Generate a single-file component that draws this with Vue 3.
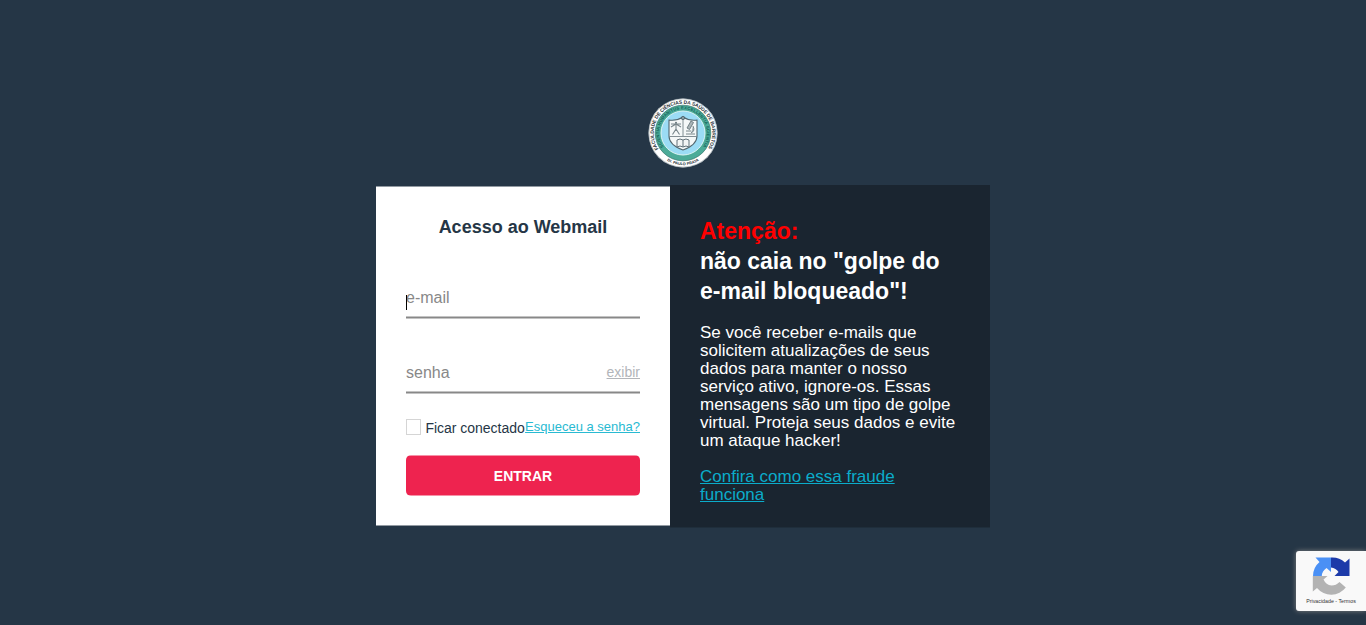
<script setup>
const message = [
  'Se você receber e-mails que',
  'solicitem atualizações de seus',
  'dados para manter o nosso',
  'serviço ativo, ignore-os. Essas',
  'mensagens são um tipo de golpe',
  'virtual. Proteja seus dados e evite',
  'um ataque hacker!',
]
</script>

<template>
  <main class="page">
    <svg class="crest" viewBox="0 0 80 80" width="80" height="80">
      <defs>
        <path id="outer-top" d="M15.4 56 A29.3 29.3 0 1 1 64.6 56" />
        <path id="outer-bottom" d="M12 55.6 A32 32 0 0 0 68 55.6" />
        <path id="inner-top" d="M20.7 54 A23.8 23.8 0 1 1 59.3 54" />
      </defs>
      <circle cx="40" cy="40" r="34.5" fill="#fff" />
      <circle cx="40" cy="40" r="34.2" fill="none" stroke="#87939b" stroke-width=".6" />
      <circle cx="40" cy="40" r="27.8" fill="#4cab98" stroke="#37756d" stroke-width=".7" />
      <circle cx="40" cy="40" r="22" fill="#9bdcf5" stroke="#dff5f5" stroke-width="1" />
      <text class="ring"><textPath href="#outer-top" textLength="124">FACULDADE DE CIÊNCIAS DA SAÚDE DE BARRETOS</textPath></text>
      <text class="ring small"><textPath href="#outer-bottom" startOffset="50%" text-anchor="middle">Dr. PAULO PRATA</textPath></text>
      <text class="ring motto"><textPath href="#inner-top" textLength="103">SCIENTIA HUMANITUS EXCELLENTIA SCIENTIA</textPath></text>
      <path d="M26 27 Q34 28 40 24 Q46 28 54 27 V43 Q54 52 40 57 Q26 52 26 43 Z" fill="#f4f8f8" stroke="#52666e" stroke-width="1.1" />
      <path d="M26.5 43.5 H53.5 M40 26 V43" stroke="#66747a" stroke-width=".8" />
      <circle cx="40" cy="25" r="1.7" fill="#87999e" stroke="#405a63" stroke-width=".7" />
      <circle cx="33" cy="29.8" r="1" fill="#68777d" />
      <path d="M28 31 H38 M28 34 L33 31 L38 34 M33 30 V36 L29.5 41.5 M33 36 L36.5 41.5" fill="none" stroke="#78868b" stroke-width="1.1" />
      <path d="M48 28 L50.5 29.5 L46.5 36.5 L44 35 Z M50 33 Q52.5 38 48 40 M43 41 H52 M43 38 H48" fill="#a9b4b7" stroke="#69787e" stroke-width=".9" />
      <path d="M34 47 Q37 45 40 47 Q43 45 46 47 V54 Q43 52 40 54 Q37 52 34 54 Z M40 47 V54" fill="#f2f5f5" stroke="#62727a" stroke-width="1" />
    </svg>

    <div class="panels">
      <form class="login" @submit.prevent>
        <h1>Acesso ao Webmail</h1>
        <div class="field email"><span>e-mail</span><i class="caret"></i></div>
        <div class="field password"><span>senha</span><a class="show">exibir</a></div>
        <div class="options">
          <label><i class="checkbox"></i><span>Ficar conectado</span></label>
          <a>Esqueceu a senha?</a>
        </div>
        <button>ENTRAR</button>
      </form>
      <aside class="notice">
        <h2><em>Atenção:</em><br>não caia no "golpe do<br>e-mail bloqueado"!</h2>
        <p><template v-for="line in message" :key="line">{{ line }}<br></template></p>
        <a>Confira como essa fraude<br>funciona</a>
      </aside>
    </div>

    <div class="captcha">
      <svg viewBox="0 0 40 40" width="40" height="40">
        <path d="M20 1.5 A18.5 18.5 0 0 1 34 6.5 L38.5 2.5 V20 H23.5 L27.5 16 Q25 12 20 11.5 Z" fill="#1c3aa9" />
        <path d="M2 20 A18.5 18.5 0 0 1 8.5 6 L4.5 1.5 H20 V16 L15.5 12 Q11 15 10.8 20 Z" fill="#4a90f5" />
        <path d="M1.8 20 H16.5 L12.5 23.5 Q15 29 20.5 29.5 Q25 29.5 28.5 26 L34.8 31.5 A18.5 18.5 0 0 1 6 32 L1.8 35.5 Z" fill="#b3b3b3" />
      </svg>
      <small>Privacidade - Termos</small>
    </div>
  </main>
</template>

<style>
body { margin: 0; background: #253646; }
</style>

<style scoped>
* { box-sizing: border-box; }
.page { height: 625px; overflow: hidden; position: relative; display: flex; flex-direction: column; align-items: center; padding-top: 93px; font-family: Arial, "Liberation Sans", sans-serif; background: #253646; }
.crest { display: block; flex: none; }
.ring { font: bold 4.9px "Liberation Sans", sans-serif; fill: #283137; }
.small { font-size: 3.9px; }
.motto { font-size: 4.3px; fill: #17665c; }
.panels { display: flex; align-items: flex-start; width: 614px; margin-top: 12px; }
.login { width: 294px; height: 340px; margin-top: 1px; padding: 0 30px; background: #fff; border-top: 1px solid #929aa2; border-bottom: 1px solid #929aa2; }
h1 { margin: 30px 0 0; font-size: 18px; line-height: 20px; color: #253646; text-align: center; }
.field { position: relative; display: flex; justify-content: space-between; height: 34px; padding-top: 2px; color: #888; font-size: 16px; line-height: 22px; background: linear-gradient(#c3c3c3 0 1px, #888 1px 2px, #c3c3c3 2px) bottom / 100% 3px no-repeat; }
.email { margin-top: 48px; }
.password { margin-top: 41px; }
.caret { position: absolute; left: 0; top: 10px; width: 1px; height: 15px; background: #000; }
.show { font-size: 14px; line-height: 20px; color: #b2b5ba; text-decoration: underline; }
.options { display: flex; justify-content: space-between; height: 18px; margin-top: 24px; }
label { display: flex; gap: 4.5px; font-size: 14px; line-height: 20px; color: #253646; white-space: nowrap; }
label span { letter-spacing: -.03px; }
.checkbox { flex: none; width: 15px; height: 16px; margin-top: 1px; border: 1px solid #d5d5d5; }
.options a { font-size: 13px; line-height: 17px; color: #29bad2; text-decoration: underline; white-space: nowrap; }
button { display: block; width: 234px; height: 41px; margin-top: 19px; padding: 0; border: 0; border-radius: 5px; background: linear-gradient(#f691a7 0 1px, #ee234f 1px 40px, #f691a7 40px); color: #fff; font: bold 14px/41px "Liberation Sans", sans-serif; padding-top: 1px; }
.notice { width: 320px; height: 343px; padding: 31px 30px 0; background: #1a2530; color: #fff; border-bottom: 1px solid #1f2e3b; }
h2 { margin: 0; font-size: 23px; line-height: 30px; }
em { font-style: normal; color: #f00; }
p { margin: 18px 0; font-size: 17px; line-height: 18px; }
.notice a { display: block; color: #0bacca; font-size: 17px; line-height: 18px; text-decoration: underline; }
.captcha { position: absolute; left: 1296px; top: 551px; width: 70px; height: 60px; padding-top: 5px; display: flex; flex-direction: column; align-items: center; border-radius: 3px 0 0 3px; background: #f9f9f9; box-shadow: 0 0 5px #808080; }
.captcha small { margin-top: 1px; font-size: 5.3px; line-height: 9px; color: #333; white-space: nowrap; }
</style>
